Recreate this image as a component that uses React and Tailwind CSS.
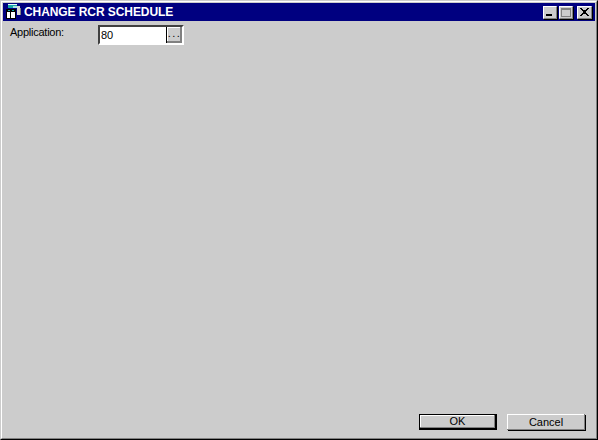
import React from "react";

const font = { fontFamily: '"Liberation Sans", Arial, sans-serif' };

const raisedBorder = "border border-t-white border-l-white border-r-[#808080] border-b-[#808080]";

const WindowIcon = () => (
    <svg width="16" height="16" viewBox="0 0 16 16" shapeRendering="crispEdges" className="shrink-0">
        <path d="M3 0h9v1h-9z" fill="#e8f8f8" />
        <path d="M3 1h9v3H3z" fill="#18a8a8" />
        <path d="M8 2h4v2H8z" fill="#a8e0e0" />
        <path d="M12 2h3v9h-3z" fill="#d8d8d8" />
        <path d="M15 4h1v7h-1z" fill="#808080" />
        <path d="M1 5h10v10H1z" fill="#000000" />
        <path d="M2 8h3v6H2zM6 8h4v6H6z" fill="#ffffff" />
        <path d="M3 6h2v1H3zM7 6h2v1H7z" fill="#18a8a8" />
    </svg>
);

const CaptionButton = ({ children, className = "w-[14px]" }) => (
    <div className={`h-[13px] bg-[#cccccc] shadow-[1px_1px_0_#000] ${raisedBorder} flex items-center justify-center ${className}`}>
        {children}
    </div>
);

const DialogButton = ({ label, isDefault, className = "" }) => (
    <div className={`h-[16px] bg-[#cccccc] flex items-center justify-center text-[11px] text-black ${isDefault ? "border border-black border-r-2 border-b-2 shadow-[inset_-1px_-1px_0_#808080,inset_1px_1px_0_#fff]" : "shadow-[1px_1px_0_#000,inset_-1px_-1px_0_#808080,inset_1px_1px_0_#fff]"} ${className}`}>
        {label}
    </div>
);

export default function App() {
    return (
        <div style={font} className="w-[598px] h-[440px] border border-t-[#cccccc] border-l-[#cccccc] border-r-black border-b-black overflow-hidden">
            <div className="h-full bg-[#cccccc] flex flex-col border border-t-white border-l-white border-r-[#808080] border-b-[#808080]">
                <div className="h-[18px] mt-[1px] mx-[1px] bg-[#000080] flex items-center pl-[2px] pr-[3px] shrink-0">
                    <WindowIcon />
                    <span className="ml-[3px] text-[12px] font-bold tracking-[-0.08px] text-white leading-none">CHANGE RCR SCHEDULE</span>
                    <div className="ml-auto flex items-center">
                        <CaptionButton>
                            <div className="w-[6px] h-[2px] bg-black mt-[6px] mr-[2px]"></div>
                        </CaptionButton>
                        <CaptionButton className="w-[14px] ml-[2px]">
                            <div className="w-[10px] h-[9px] border border-t-2 border-[#808080]"></div>
                        </CaptionButton>
                        <CaptionButton className="w-[15px] ml-[4px]">
                            <svg width="9" height="8" viewBox="0 0 9 8" shapeRendering="crispEdges">
                                <path d="M0 0h2v1h1v1h3V1h1V0h2v1H8v1H7v1H6v2h1v1h1v1h1v1H7V7H6V6H3v1H2v1H0V7h1V6h1V5h1V3H2V2H1V1H0z" fill="#000" />
                            </svg>
                        </CaptionButton>
                    </div>
                </div>

                <div className="flex items-start pl-[8px] pt-[4px] shrink-0">
                    <span className="w-[88px] text-[11px] tracking-[-0.25px] leading-[14px] text-black">Application:</span>
                    <div className="flex h-[20px] w-[86px] border-2 border-t-[#404040] border-l-[#404040] border-r-white border-b-white bg-white">
                        <div className="flex-1 text-[11px] leading-[16px] text-black pl-[1px]">80</div>
                        <div className="w-[16px] h-[16px] bg-[#cccccc] border-l border-l-black shadow-[inset_-2px_-2px_0_#808080,inset_1px_1px_0_#fff] text-[11px] leading-[13px] tracking-[1.5px] text-center text-black">...</div>
                    </div>
                </div>

                <div className="mt-auto flex justify-end pr-[11px] pb-[8px]">
                    <DialogButton label="OK" isDefault className="w-[78px]" />
                    <DialogButton label="Cancel" className="w-[78px] ml-[10px]" />
                </div>
            </div>
        </div>
    );
}
